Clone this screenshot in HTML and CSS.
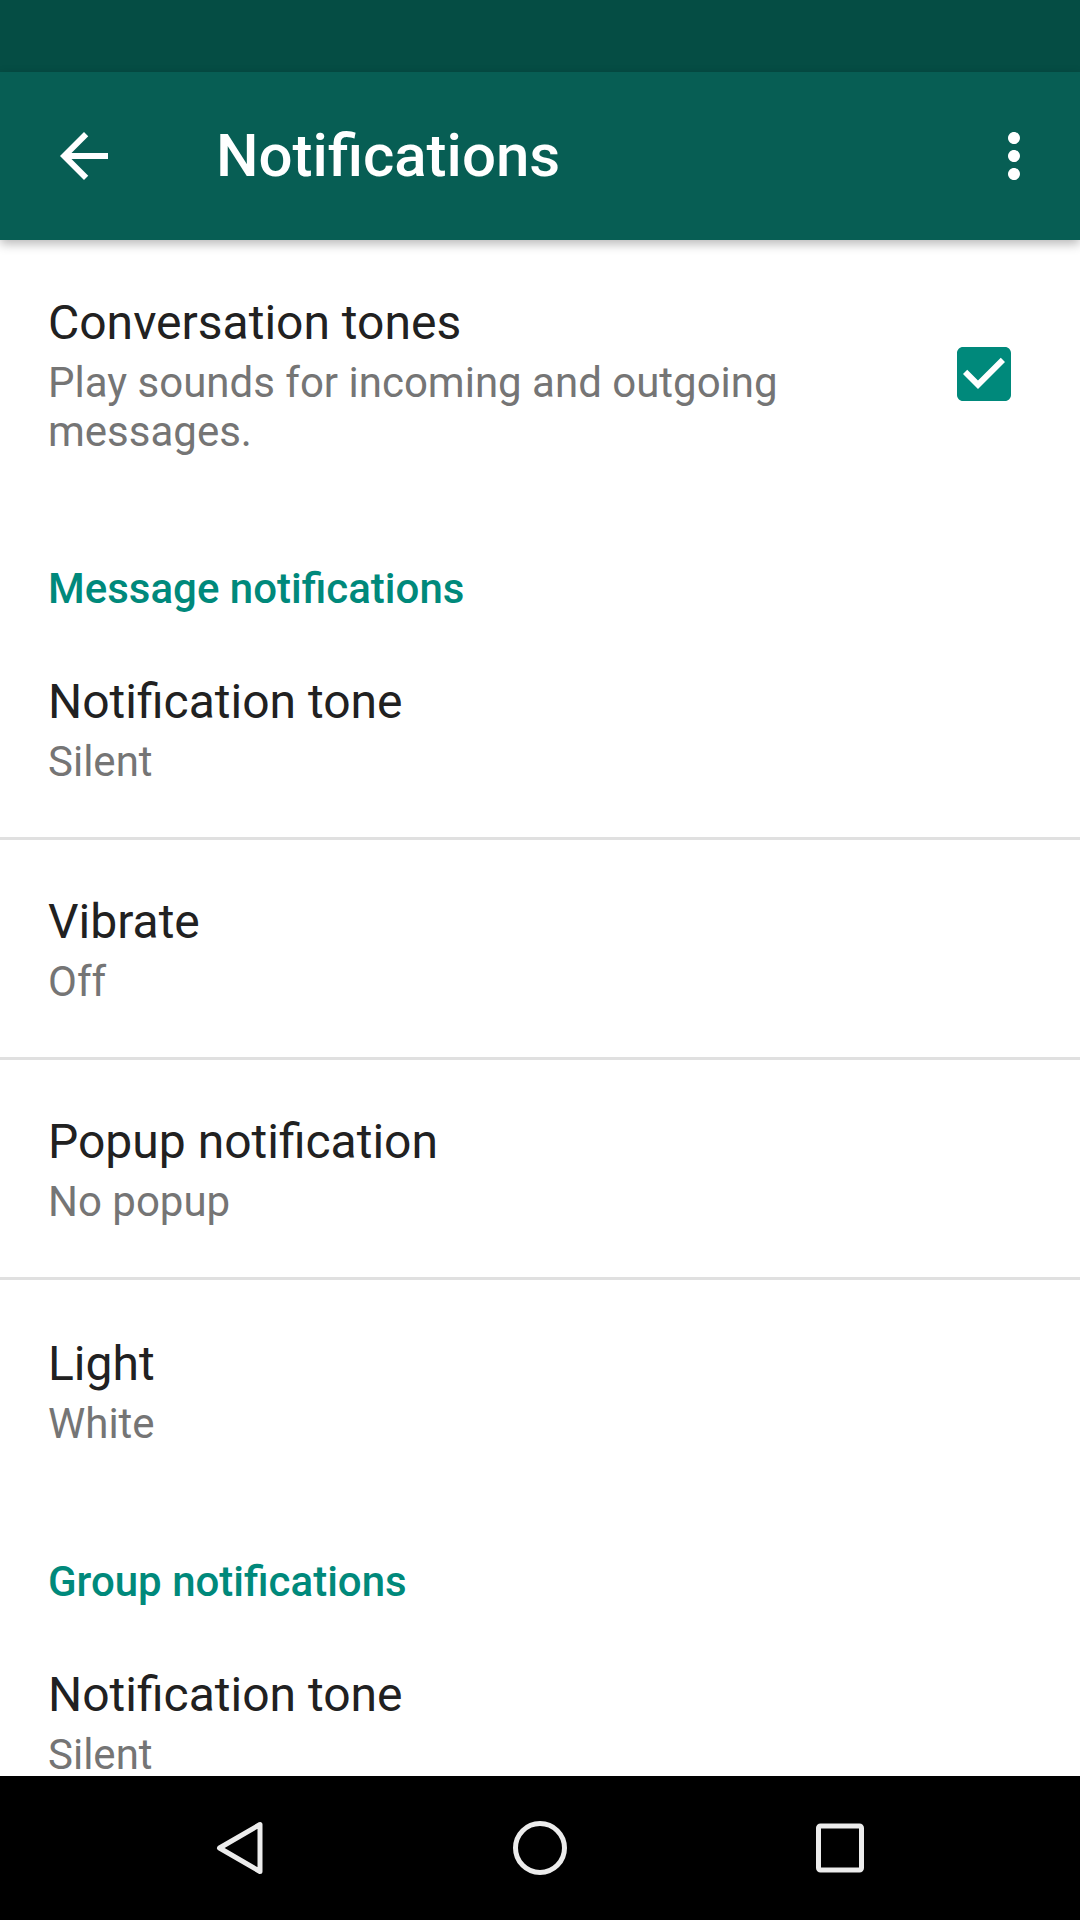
FILE: index.html
```html
<!DOCTYPE html>
<html lang="en">
<head>
<meta charset="utf-8">
<title>Notifications</title>
<link rel="stylesheet" href="styles.css">
</head>
<body>
<div class="screen">
  <div class="statusbar"></div>
  <header class="toolbar">
    <div class="icon-btn back">
      <svg viewBox="0 0 24 24" width="72" height="72"><path fill="#fff" d="M20 11H7.83l5.59-5.59L12 4l-8 8 8 8 1.41-1.41L7.83 13H20v-2z"/></svg>
    </div>
    <h1 class="title">Notifications</h1>
    <div class="icon-btn more">
      <svg viewBox="0 0 24 24" width="72" height="72"><path fill="#fff" d="M12 8c1.1 0 2-.9 2-2s-.9-2-2-2-2 .9-2 2 .9 2 2 2zm0 2c-1.1 0-2 .9-2 2s.9 2 2 2 2-.9 2-2-.9-2-2-2zm0 6c-1.1 0-2 .9-2 2s.9 2 2 2 2-.9 2-2-.9-2-2-2z"/></svg>
    </div>
  </header>
  <main class="content">
    <div class="pref pref-check">
      <div class="pref-text">
        <div class="pref-title">Conversation tones</div>
        <div class="pref-summary">Play sounds for incoming and outgoing messages.</div>
      </div>
      <svg class="checkbox" viewBox="3 3 18 18" width="54" height="54"><path fill="#00897b" d="M19 3H5c-1.11 0-2 .9-2 2v14c0 1.1.89 2 2 2h14c1.11 0 2-.9 2-2V5c0-1.1-.89-2-2-2zm-9 14l-5-5 1.41-1.41L10 14.17l7.59-7.59L19 8l-9 9z"/></svg>
    </div>

    <div class="category">Message notifications</div>

    <div class="pref divided">
      <div class="pref-title">Notification tone</div>
      <div class="pref-summary">Silent</div>
    </div>
    <div class="pref divided">
      <div class="pref-title">Vibrate</div>
      <div class="pref-summary">Off</div>
    </div>
    <div class="pref divided">
      <div class="pref-title">Popup notification</div>
      <div class="pref-summary">No popup</div>
    </div>
    <div class="pref last">
      <div class="pref-title">Light</div>
      <div class="pref-summary">White</div>
    </div>

    <div class="category">Group notifications</div>

    <div class="pref">
      <div class="pref-title">Notification tone</div>
      <div class="pref-summary">Silent</div>
    </div>
  </main>
  <nav class="navbar">
    <div class="nav-btn">
      <svg viewBox="0 0 60 60" width="60" height="60"><path d="M9.5 30 L50 6.5 L50 53.5 Z" fill="none" stroke="#ececec" stroke-width="5" stroke-linejoin="round"/></svg>
    </div>
    <div class="nav-btn">
      <svg viewBox="0 0 60 60" width="60" height="60"><circle cx="30" cy="30" r="24.5" fill="none" stroke="#ececec" stroke-width="5"/></svg>
    </div>
    <div class="nav-btn">
      <svg viewBox="0 0 60 60" width="60" height="60"><rect x="8.5" y="8" width="43" height="44" rx="2" fill="none" stroke="#ececec" stroke-width="5"/></svg>
    </div>
  </nav>
</div>
</body>
</html>
```

FILE: styles.css
```css
html, body {
  margin: 0;
  padding: 0;
  background: #ffffff;
}

body {
  font-family: Roboto, "Noto Sans", "Liberation Sans", sans-serif;
}

.screen {
  width: 1080px;
  height: 1920px;
  display: flex;
  flex-direction: column;
  overflow: hidden;
  background: #ffffff;
}

.statusbar {
  height: 72px;
  flex: 0 0 72px;
  background: #054d44;
}

.toolbar {
  height: 168px;
  flex: 0 0 168px;
  background: #075e54;
  display: flex;
  align-items: center;
  position: relative;
  z-index: 2;
  box-shadow: 0 4px 10px rgba(0, 0, 0, 0.28);
}

.icon-btn {
  width: 72px;
  height: 72px;
  display: flex;
}

.icon-btn.back {
  margin-left: 48px;
}

.icon-btn.more {
  margin-right: 30px;
}

.title {
  flex: 1;
  margin: 0 0 0 96px;
  font-size: 60px;
  line-height: 70px;
  font-weight: 500;
  color: #ffffff;
}

.content {
  flex: 1;
  overflow: hidden;
}

.pref {
  padding: 54px 48px 51px 48px;
}

.pref.divided {
  border-bottom: 3px solid #e0e0e0;
}

.pref.last {
  padding-top: 56px;
  padding-bottom: 52px;
}

.pref-check {
  display: flex;
  align-items: center;
  padding: 55px 69px 51px 48px;
}

.pref-text {
  flex: 1;
  padding-right: 90px;
}

.checkbox {
  flex: 0 0 54px;
  display: block;
  margin-top: -3px;
}

.pref-title {
  font-size: 48px;
  line-height: 56px;
  color: #212121;
}

.pref-summary {
  margin-top: 7px;
  font-size: 42px;
  line-height: 49px;
  color: #757575;
}

.category {
  padding: 57px 48px 7px 48px;
  font-size: 42px;
  line-height: 49px;
  font-weight: 500;
  color: #00897b;
}

.navbar {
  height: 144px;
  flex: 0 0 144px;
  background: #000000;
  display: flex;
  justify-content: center;
  align-items: center;
  gap: 240px;
}

.nav-btn {
  width: 60px;
  height: 60px;
  display: flex;
}
```
